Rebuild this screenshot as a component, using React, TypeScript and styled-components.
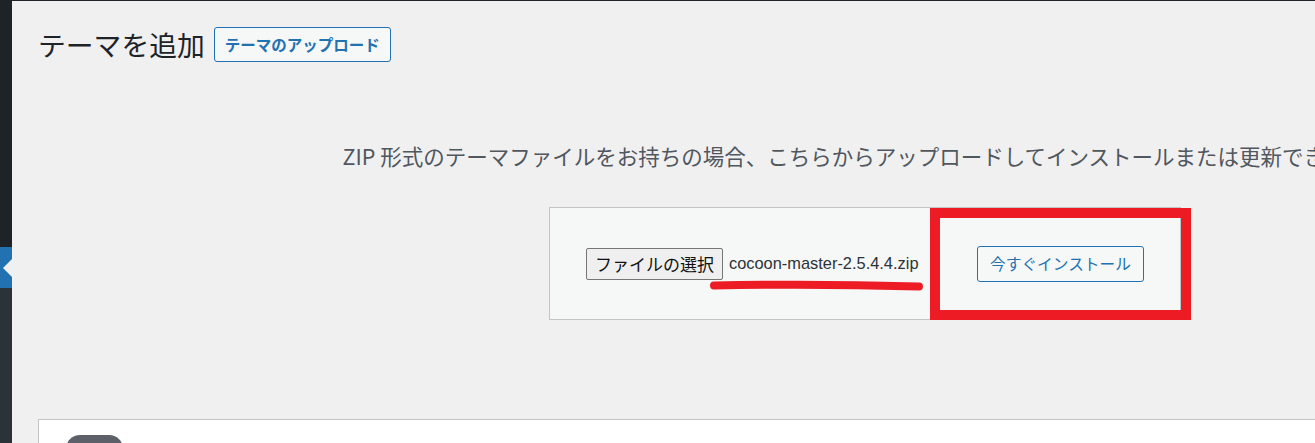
import React from "react";
import styled, { createGlobalStyle } from "styled-components";

const GlobalStyle = createGlobalStyle`
  html, body {
    margin: 0;
    padding: 0;
    background: #f0f0f0;
    overflow: hidden;
  }
  body {
    font-family: "Noto Sans CJK JP", "Noto Sans", sans-serif;
  }
  * { box-sizing: border-box; }
`;

const Shell = styled.div`
  display: flex;
  min-height: 443px;
  height: 100vh;
  border-top: 1px solid #1d2327;
`;

const Sidebar = styled.nav`
  flex: 0 0 12px;
  display: flex;
  flex-direction: column;
`;

const SideTop = styled.div`
  height: 246px;
  background: #1d2327;
`;

const SideCurrent = styled.div`
  position: relative;
  height: 41px;
  background: #2271b1;
  &::after {
    content: "";
    position: absolute;
    right: 0;
    top: 50%;
    margin-top: -9px;
    border: 9px solid transparent;
    border-right-color: #f0f0f0;
    border-left-width: 0;
  }
`;

const SideRest = styled.div`
  flex: 1;
  background: #2c3338;
`;

const Main = styled.main`
  flex: 0 0 auto;
  width: 1680px;
  padding: 26px 0 0 26px;
  display: flex;
  flex-direction: column;
`;

const Content = styled.div`
  width: 1654px;
  display: flex;
  flex-direction: column;
`;

const Header = styled.div`
  display: flex;
  align-items: center;
  gap: 9px;
  height: 35px;
`;

const Title = styled.h1`
  margin: 0;
  font-size: 27.8px;
  font-weight: 400;
  line-height: 35px;
  color: #1d2327;
`;

const OutlineButton = styled.button<{ $bold?: boolean; $size: number }>`
  display: inline-flex;
  align-items: center;
  justify-content: center;
  border: 1px solid #2271b1;
  border-radius: 3px;
  background: #f6f7f7;
  color: #2271b1;
  font-family: "Noto Sans CJK JP", sans-serif;
  font-size: ${(p) => p.$size}px;
  font-weight: ${(p) => (p.$bold ? 700 : 400)};
  line-height: 1;
  padding: 0;
  cursor: pointer;
  white-space: nowrap;
`;

const UploadButton = styled(OutlineButton)`
  width: 177px;
  height: 35px;
`;

const InstallButton = styled(OutlineButton)`
  width: 167px;
  height: 36px;
`;

const Help = styled.p`
  margin: 77px 0 0;
  text-align: center;
  white-space: nowrap;
  font-size: 21.5px;
  line-height: 33px;
  color: #50575e;
`;

const UploadForm = styled.form`
  position: relative;
  align-self: center;
  margin-top: 35px;
  width: 632px;
  height: 113px;
  padding: 0 36px;
  display: flex;
  align-items: center;
  justify-content: space-between;
  background: #f6f7f7;
  border: 1px solid #c3c4c7;
`;

const FileField = styled.div`
  display: flex;
  align-items: center;
  gap: 6px;
`;

const FileButton = styled.span`
  display: inline-flex;
  align-items: center;
  justify-content: center;
  width: 137px;
  height: 32px;
  background: #efefef;
  border: 1px solid #767676;
  border-radius: 2px;
  color: #111;
  font-size: 17px;
  line-height: 1;
`;

const FileName = styled.span`
  font-family: "Liberation Sans", Arial, sans-serif;
  font-size: 16.4px;
  color: #2c3338;
`;

const MarkBox = styled.div`
  position: absolute;
  left: 380px;
  top: 0px;
  width: 261px;
  height: 112px;
  border: 10px solid #ed1c24;
  pointer-events: none;
`;

const MarkLine = styled.svg`
  position: absolute;
  left: 155px;
  top: 70px;
  width: 225px;
  height: 20px;
  pointer-events: none;
`;

const Card = styled.section`
  margin-top: 99px;
  width: 1640px;
  height: 120px;
  background: #fff;
  border: 1px solid #c3c4c7;
  padding: 15px 0 0 27px;
`;

const Avatar = styled.div`
  width: 57px;
  height: 57px;
  border-radius: 14px 14px 0 0;
  background: #5d6068;
`;

export default function App() {
  return (
    <>
      <GlobalStyle />
      <Shell>
        <Sidebar>
          <SideTop />
          <SideCurrent />
          <SideRest />
        </Sidebar>
        <Main>
          <Content>
            <Header>
              <Title>テーマを追加</Title>
              <UploadButton $bold $size={15.5}>テーマのアップロード</UploadButton>
            </Header>
            <Help>
              ZIP 形式のテーマファイルをお持ちの場合、こちらからアップロードしてインストールまたは更新できます。
            </Help>
            <UploadForm onSubmit={(e) => e.preventDefault()}>
              <FileField>
                <FileButton>ファイルの選択</FileButton>
                <FileName>cocoon-master-2.5.4.4.zip</FileName>
              </FileField>
              <InstallButton $size={15.7} type="submit">今すぐインストール</InstallButton>
              <MarkLine viewBox="0 0 225 20">
                <path
                  d="M9 7.5 Q 110 5.5 214 8.5"
                  stroke="#ed1c24"
                  strokeWidth="8"
                  strokeLinecap="round"
                  fill="none"
                />
              </MarkLine>
              <MarkBox />
            </UploadForm>
            <Card>
              <Avatar />
            </Card>
          </Content>
        </Main>
      </Shell>
    </>
  );
}
